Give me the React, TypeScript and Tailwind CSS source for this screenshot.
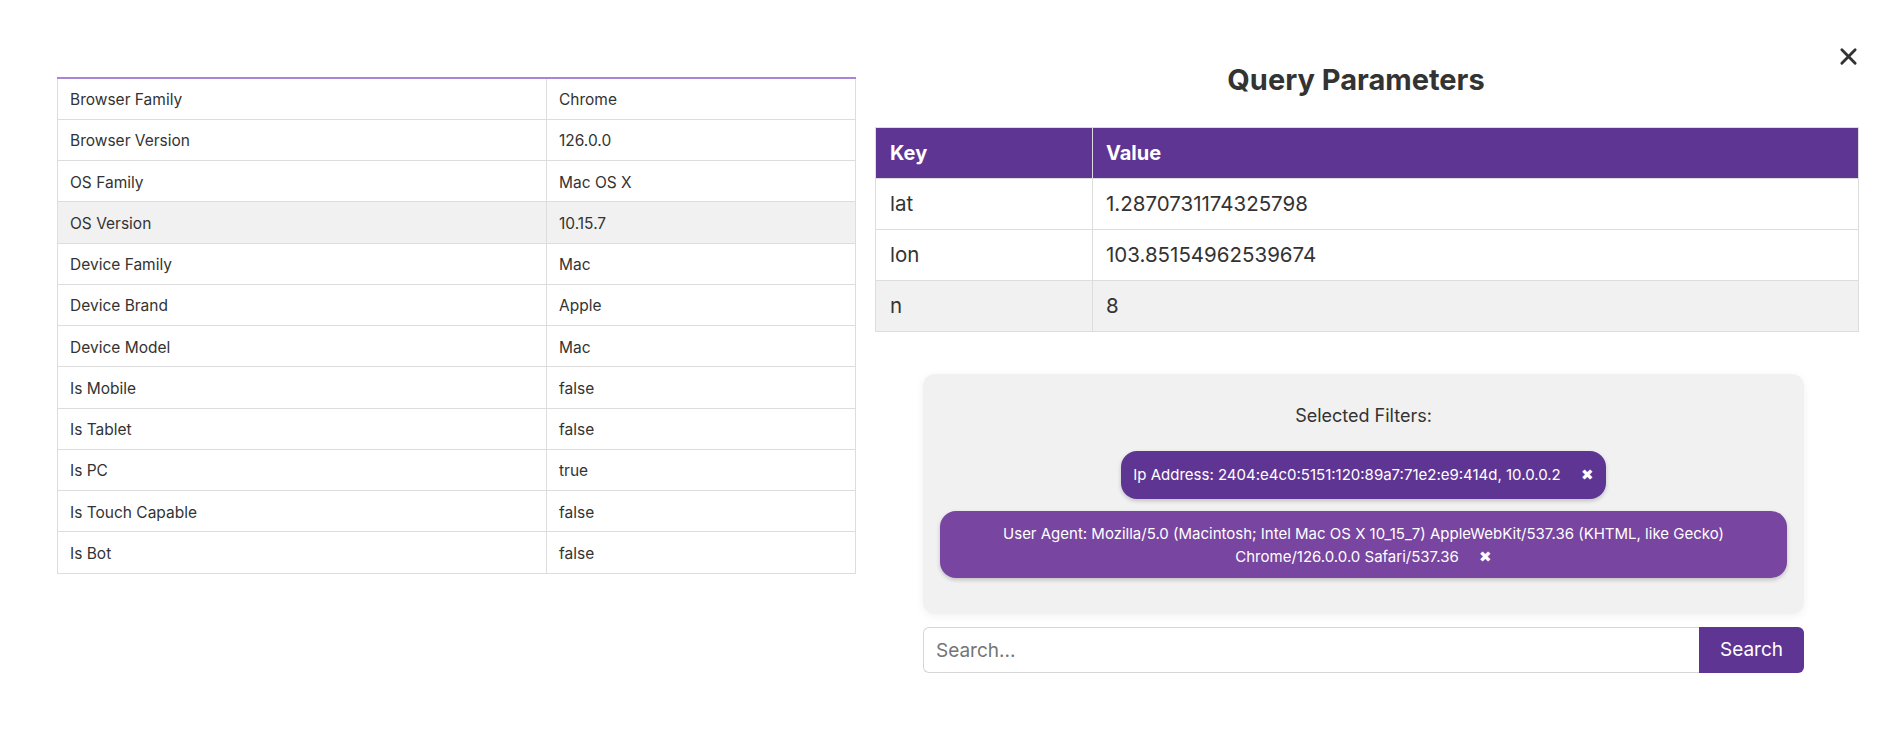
// Request details modal: device info table on the left, query params + filters on the right.
import React from "react";

const deviceRows: [string, string][] = [
  ["Browser Family", "Chrome"],
  ["Browser Version", "126.0.0"],
  ["OS Family", "Mac OS X"],
  ["OS Version", "10.15.7"],
  ["Device Family", "Mac"],
  ["Device Brand", "Apple"],
  ["Device Model", "Mac"],
  ["Is Mobile", "false"],
  ["Is Tablet", "false"],
  ["Is PC", "true"],
  ["Is Touch Capable", "false"],
  ["Is Bot", "false"],
];

const queryRows: [string, string][] = [
  ["lat", "1.2870731174325798"],
  ["lon", "103.85154962539674"],
  ["n", "8"],
];

function CloseIcon() {
  return (
    <svg width="19" height="19" viewBox="0 0 20 20" fill="none">
      <path d="M3 3 L17 17 M17 3 L3 17" stroke="#333" strokeWidth="3" strokeLinecap="round" />
    </svg>
  );
}

export default function App() {
  return (
    <div
      className="relative flex min-h-[756px] items-start gap-[19px] bg-white pt-[62px] pl-[57px] text-[#333]"
      style={{ fontFamily: "Inter, 'Noto Sans', sans-serif" }}
    >
      <button className="absolute top-[47px] right-[46px]" aria-label="close">
        <CloseIcon />
      </button>

      {/* 左: デバイス情報 */}
      <div className="mt-[15px] w-[799px]">
        <table className="w-full border-collapse border-t-2 border-t-[#a985d8] text-[15.5px]">
          <tbody>
            {deviceRows.map(([k, v], i) => (
              <tr key={k} className={i === 3 ? "h-[41.25px] bg-[#f1f1f1]" : "h-[41.25px]"}>
                <td className="w-[489px] border border-[#dddddd] px-3 pt-[2px] pb-0">{k}</td>
                <td className="border border-[#dddddd] px-3 pt-[2px] pb-0">{v}</td>
              </tr>
            ))}
          </tbody>
        </table>
      </div>

      {/* 右: クエリパラメータとフィルター */}
      <div className="w-[984px]">
        <h2 className="mb-[29px] h-[36px] pr-[22px] text-center text-[29px] leading-[36px] font-bold text-[#333]">
          Query Parameters
        </h2>
        <table className="w-full border-collapse text-[20.5px]">
          <thead>
            <tr className="h-[51px] bg-[#5f3593] text-white">
              <th className="w-[217px] border border-[#dddddd] px-[14px] text-left text-[20px] font-bold">Key</th>
              <th className="border border-[#dddddd] px-[13px] text-left text-[20px] font-bold">Value</th>
            </tr>
          </thead>
          <tbody>
            {queryRows.map(([k, v], i) => (
              <tr key={k} className={i === 2 ? "h-[51px] bg-[#f1f1f1]" : "h-[51px]"}>
                <td className="border border-[#dddddd] px-[14px]">{k}</td>
                <td className="border border-[#dddddd] px-[13px]">{v}</td>
              </tr>
            ))}
          </tbody>
        </table>

        <div className="mt-[42px] ml-[48px] w-[881px]">
          <div className="flex flex-col items-center rounded-[12px] bg-[#f1f1f1] px-4 pt-[30px] pb-[36px] shadow-[0_2px_8px_rgba(0,0,0,0.06)]">
            <p className="mb-[23px] text-[18px] leading-[24px] text-[#333]">Selected Filters:</p>
            <div className="flex h-[48px] items-center rounded-[16px] bg-[#5f3593] px-3 text-[15px] leading-[24px] text-white shadow-[0_2px_4px_rgba(0,0,0,0.2)]">
              <span>Ip Address: 2404:e4c0:5151:120:89a7:71e2:e9:414d, 10.0.0.2</span>
              <span className="ml-[20px] text-[15px]">✖</span>
            </div>
            <div className="mt-3 w-[847px] rounded-[16px] bg-[#7845a0] px-3 py-[10.5px] text-center text-[15px] leading-[23px] text-white shadow-[0_2px_4px_rgba(0,0,0,0.2)]">
              User Agent: Mozilla/5.0 (Macintosh; Intel Mac OS X 10_15_7) AppleWebKit/537.36 (KHTML, like Gecko)
              Chrome/126.0.0.0 Safari/537.36
              <span className="ml-[20px] text-[15px]">✖</span>
            </div>
          </div>

          <div className="mt-[13px] flex h-[46px]">
            <input
              className="h-full flex-1 rounded-l-[6px] border border-r-0 border-[#d6d6d6] bg-white px-3 text-[19px] text-[#333] outline-none placeholder:text-[#757575]"
              placeholder="Search..."
            />
            <button className="h-full w-[105px] rounded-r-[6px] bg-[#5f3593] text-[19px] text-white">Search</button>
          </div>
        </div>
      </div>
    </div>
  );
}
